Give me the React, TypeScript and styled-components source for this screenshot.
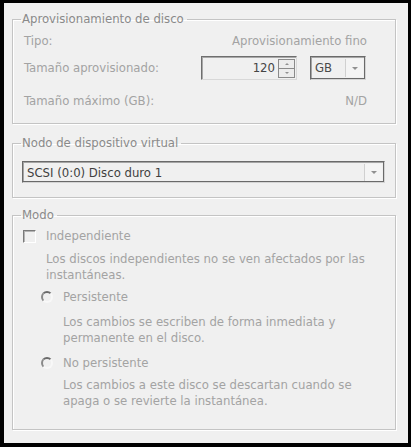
import styled, { createGlobalStyle } from 'styled-components';

const GlobalStyle = createGlobalStyle`
  html, body {
    margin: 0;
    background: #000;
  }
  body {
    font-family: "DejaVu Sans Condensed", "DejaVu Sans", sans-serif;
    font-size: 13px;
  }
`;

const Frame = styled.div`
  width: 411px;
  height: 447px;
  box-sizing: border-box;
  padding: 3px 3px 4px 4px;
  background: #000;
`;

const Panel = styled.div`
  height: 100%;
  box-sizing: border-box;
  background: #f0f0f0;
  padding: 8px 12px 0 8px;
  display: flex;
  flex-direction: column;
`;

const Group = styled.fieldset<{ $gap?: number }>`
  margin: ${(p) => p.$gap ?? 0}px 0 0 0;
  padding: 0;
  border: 1px solid #c4c4c4;
  box-shadow: inset 1px 1px 0 #fff, 1px 1px 0 #fff;
  min-width: 0;
`;

const Legend = styled.legend`
  margin-left: 8px;
  padding: 0 3px 0 1px;
  line-height: 16px;
  color: #8a8a8a;
`;

const Body = styled.div<{ $pad: string }>`
  padding: ${(p) => p.$pad};
  color: #a3a3a3;
`;

const Row = styled.div<{ $top?: number }>`
  display: flex;
  align-items: center;
  justify-content: space-between;
  margin-top: ${(p) => p.$top ?? 0}px;
  line-height: 16px;
`;

const Controls = styled.div`
  display: flex;
  gap: 13px;
  margin-right: 1px;
`;

const Spinner = styled.div`
  width: 96px;
  height: 24px;
  box-sizing: border-box;
  border: 1px solid #6e6e6e;
  border-right-color: #d8d8d8;
  border-bottom-color: #d8d8d8;
  box-shadow: inset 1px 1px 0 #a8a8a8;
  display: flex;
  align-items: center;
  justify-content: flex-end;
  padding-right: 1px;
  color: #454545;
`;

const SpinValue = styled.span`
  margin-right: 3px;
`;

const SpinButtons = styled.div`
  width: 17px;
  height: 19px;
  display: flex;
  flex-direction: column;
  border: 1px solid #8a8a8a;
  box-sizing: border-box;
`;

const SpinHalf = styled.div<{ $down?: boolean }>`
  flex: 1;
  display: flex;
  align-items: center;
  justify-content: center;
  background: #ececec;
  border-top: ${(p) => (p.$down ? '1px solid #8a8a8a' : 'none')};
`;

const Combo = styled.div<{ $width: number; $height: number; $dark?: boolean }>`
  width: ${(p) => p.$width}px;
  height: ${(p) => p.$height}px;
  box-sizing: border-box;
  border: 1px solid #d4d4d4;
  border-top-color: #6a6a6a;
  border-left-color: #6a6a6a;
  box-shadow: inset -1px -1px 0 #6a6a6a, inset 1px 1px 0 #a5a5a5;
  display: flex;
  align-items: center;
  padding: 0 2px 0 4px;
  color: ${(p) => (p.$dark ? '#3f3f3f' : '#4a4a4a')};
`;

const ComboText = styled.span`
  flex: 1;
`;

const DropButton = styled.div<{ $h: number }>`
  width: 18px;
  height: ${(p) => p.$h}px;
  box-sizing: border-box;
  background: #f4f4f4;
  border-left: 1px solid #d0d0d0;
  display: flex;
  align-items: center;
  justify-content: center;
`;

const Arrow = styled.span<{ $up?: boolean; $size?: number }>`
  width: 0;
  height: 0;
  border-left: ${(p) => p.$size ?? 3}px solid transparent;
  border-right: ${(p) => p.$size ?? 3}px solid transparent;
  ${(p) =>
    p.$up
      ? `border-bottom: ${p.$size ?? 3}px solid #909090;`
      : `border-top: ${p.$size ?? 3}px solid #909090;`}
`;

const OptionRow = styled.div<{ $indent: number; $top?: number }>`
  display: flex;
  align-items: center;
  padding-left: ${(p) => p.$indent}px;
  margin-top: ${(p) => p.$top ?? 0}px;
  line-height: 16px;
`;

const CheckBox = styled.span`
  width: 13px;
  height: 13px;
  box-sizing: border-box;
  border: 1px solid #fff;
  border-top-color: #7a7a7a;
  border-left-color: #7a7a7a;
  box-shadow: inset 1px 1px 0 #b4b4b4;
  background: #f0f0f0;
  margin-right: 10px;
`;

const Radio = styled.span`
  width: 12px;
  height: 12px;
  box-sizing: border-box;
  border-radius: 50%;
  border: 2px solid #f8f8f8;
  border-top-color: #6a6a6a;
  border-left-color: #8a8a8a;
  margin-right: 10px;
`;

const Desc = styled.div<{ $indent: number; $top: number }>`
  padding-left: ${(p) => p.$indent}px;
  margin-top: ${(p) => p.$top}px;
  line-height: 16px;
`;

export default function App() {
  return (
    <Frame>
      <GlobalStyle />
      <Panel>
        <Group>
          <Legend>Aprovisionamiento de disco</Legend>
          <Body $pad="6px 28px 14px 11px">
            <Row>
              <span>Tipo:</span>
              <span>Aprovisionamiento fino</span>
            </Row>
            <Row $top={7}>
              <span>Tamaño aprovisionado:</span>
              <Controls>
                <Spinner>
                  <SpinValue>120</SpinValue>
                  <SpinButtons>
                    <SpinHalf>
                      <Arrow $up $size={2} />
                    </SpinHalf>
                    <SpinHalf $down>
                      <Arrow $size={2} />
                    </SpinHalf>
                  </SpinButtons>
                </Spinner>
                <Combo $width={56} $height={24}>
                  <ComboText>GB</ComboText>
                  <DropButton $h={18}>
                    <Arrow />
                  </DropButton>
                </Combo>
              </Controls>
            </Row>
            <Row $top={13}>
              <span>Tamaño máximo (GB):</span>
              <span>N/D</span>
            </Row>
          </Body>
        </Group>

        <Group $gap={11}>
          <Legend>Nodo de dispositivo virtual</Legend>
          <Body $pad="10px 10px 14px 9px">
            <Combo $width={363} $height={22} $dark>
              <ComboText>SCSI (0:0) Disco duro 1</ComboText>
              <DropButton $h={17}>
                <Arrow />
              </DropButton>
            </Combo>
          </Body>
        </Group>

        <Group $gap={9}>
          <Legend>Modo</Legend>
          <Body $pad="5px 10px 20px 10px">
            <OptionRow $indent={0}>
              <CheckBox />
              <span>Independiente</span>
            </OptionRow>
            <Desc $indent={23} $top={7}>
              Los discos independientes no se ven afectados por las
              <br />
              instantáneas.
            </Desc>
            <OptionRow $indent={18} $top={6}>
              <Radio />
              <span>Persistente</span>
            </OptionRow>
            <Desc $indent={40} $top={9}>
              Los cambios se escriben de forma inmediata y
              <br />
              permanente en el disco.
            </Desc>
            <OptionRow $indent={18} $top={9}>
              <Radio />
              <span>No persistente</span>
            </OptionRow>
            <Desc $indent={40} $top={6}>
              Los cambios a este disco se descartan cuando se
              <br />
              apaga o se revierte la instantánea.
            </Desc>
          </Body>
        </Group>
      </Panel>
    </Frame>
  );
}
